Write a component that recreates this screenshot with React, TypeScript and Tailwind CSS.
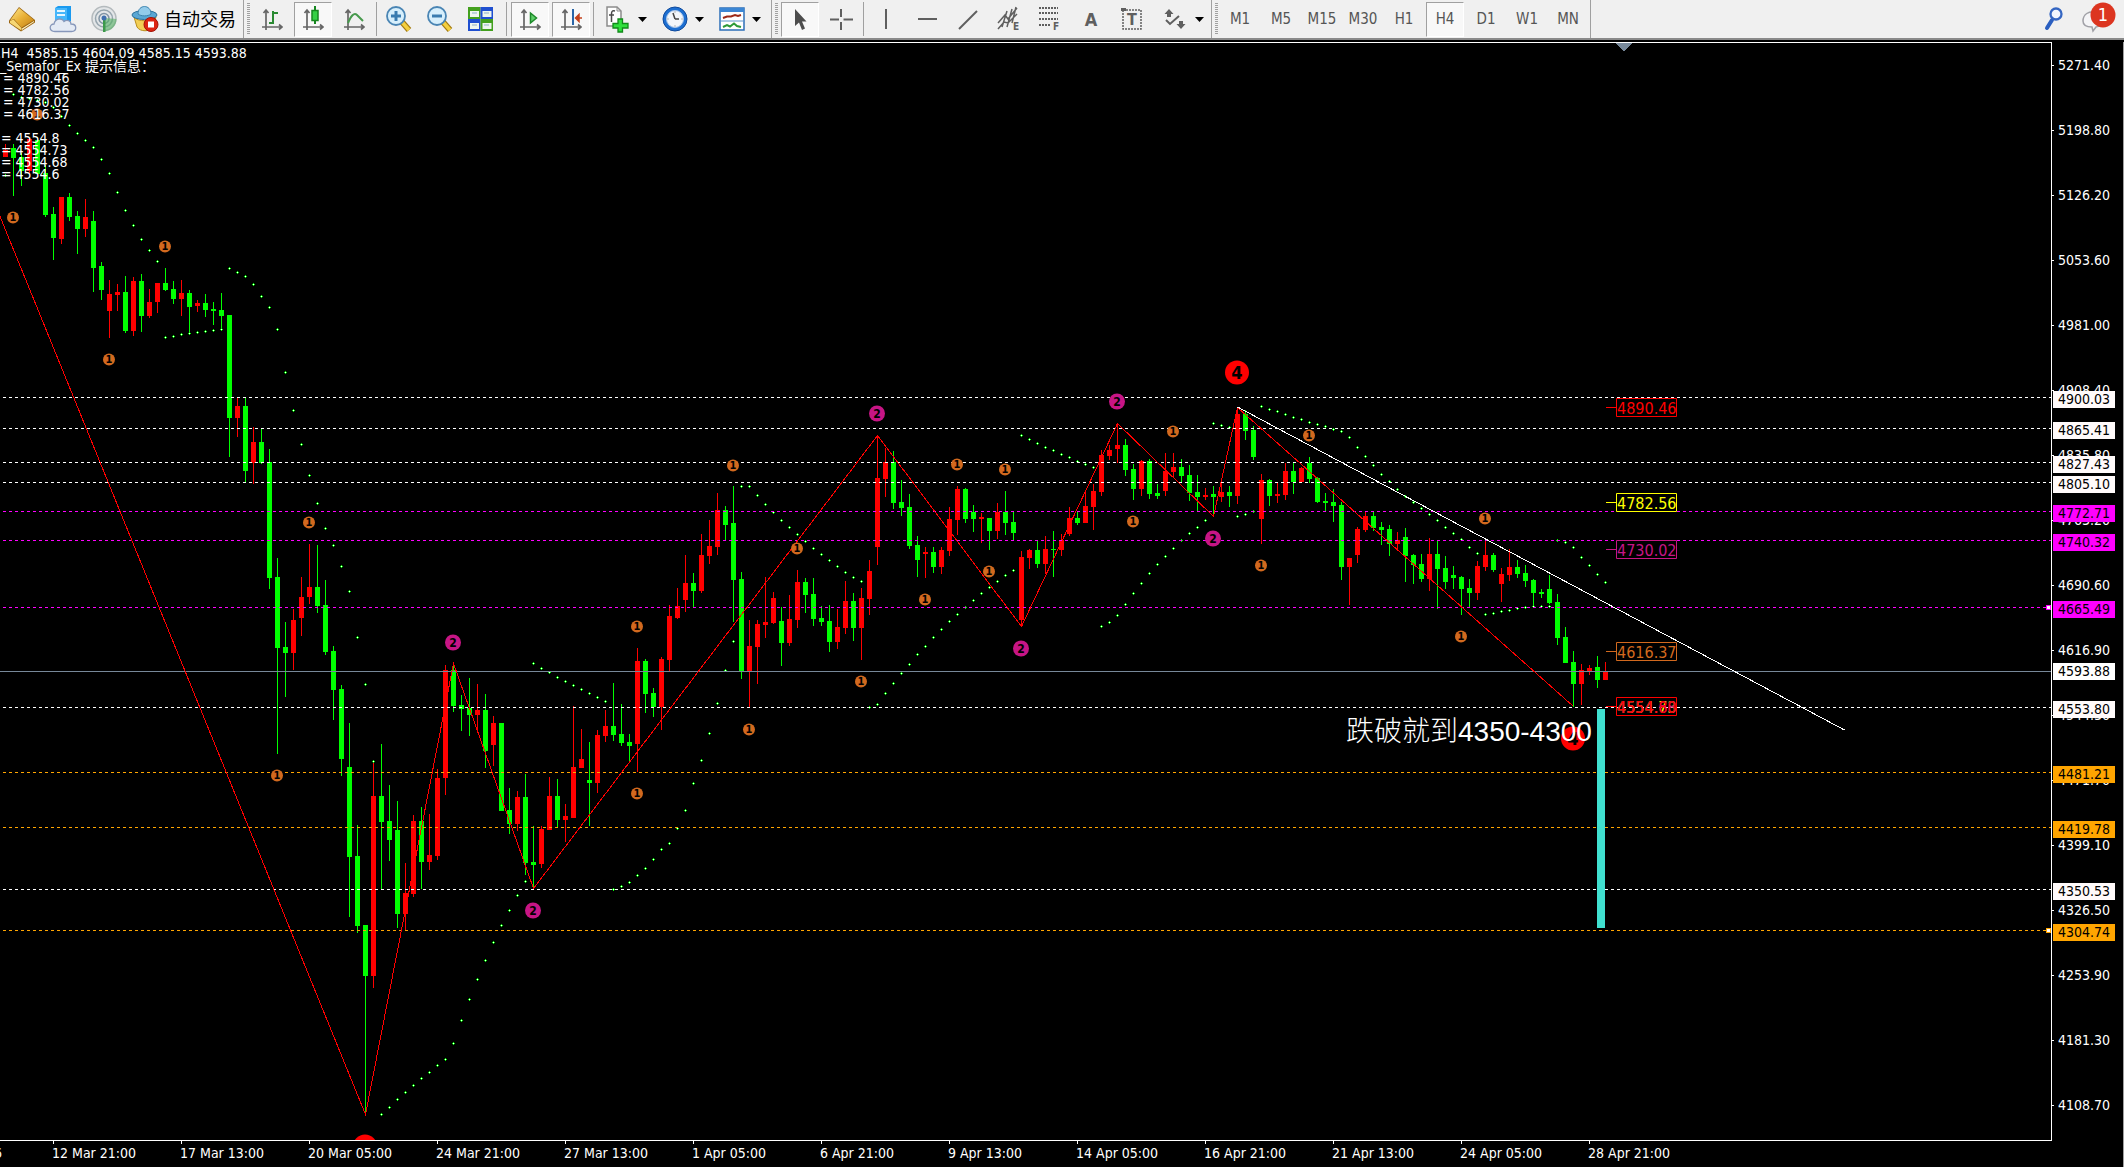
import type { ReactNode } from "react";

/* ------------------------------------------------------------------ */
/* Chart data. Vertical values are pixels from the top of the window.  */
/* ------------------------------------------------------------------ */

const PLOT_TOP = 43;
const STEP = 8;

// [high, body top, body bottom, low, rising]
type Candle = [number, number, number, number, 0 | 1];

const CANDLES: Candle[] = [
  [144, 150, 157, 157, 1], [144, 148, 158, 196, 0], [153, 157, 171, 186, 0], [137, 139, 171, 174, 1],
  [137, 140, 174, 174, 0], [165, 173, 215, 217, 0], [207, 214, 238, 260, 0], [197, 197, 239, 244, 1],
  [193, 197, 217, 221, 0], [211, 216, 229, 254, 0], [199, 217, 229, 237, 1], [211, 221, 268, 292, 0],
  [262, 266, 290, 300, 0], [280, 294, 311, 338, 1], [284, 292, 295, 311, 1], [276, 292, 331, 333, 0],
  [277, 281, 331, 336, 1], [274, 281, 316, 332, 0], [289, 302, 316, 318, 1], [283, 283, 302, 313, 1],
  [268, 283, 290, 291, 0], [281, 289, 299, 304, 0], [280, 293, 299, 316, 1], [290, 293, 307, 334, 0],
  [300, 303, 306, 312, 1], [294, 303, 310, 317, 0], [302, 309, 311, 325, 0], [293, 310, 316, 330, 0],
  [315, 315, 418, 457, 0], [398, 406, 418, 437, 1], [398, 406, 471, 483, 0], [427, 442, 463, 484, 1],
  [429, 442, 463, 464, 0], [449, 462, 578, 589, 0], [558, 577, 648, 754, 0], [622, 647, 653, 697, 0],
  [609, 620, 653, 670, 1], [577, 597, 618, 636, 1], [544, 587, 597, 604, 1], [545, 587, 606, 613, 0],
  [580, 605, 652, 655, 0], [646, 651, 690, 720, 0], [685, 689, 759, 776, 0], [723, 767, 857, 917, 0],
  [825, 856, 926, 933, 0], [925, 925, 976, 1113, 0], [762, 796, 976, 988, 1], [744, 796, 822, 889, 0],
  [785, 821, 840, 861, 0], [801, 830, 914, 928, 0], [863, 893, 914, 930, 1], [815, 821, 894, 897, 1],
  [807, 821, 862, 889, 0], [814, 855, 862, 870, 1], [769, 778, 856, 860, 1], [665, 670, 778, 795, 1],
  [665, 670, 706, 712, 0], [695, 705, 709, 731, 0], [678, 708, 715, 736, 0], [684, 710, 715, 732, 1],
  [694, 710, 751, 768, 0], [716, 723, 745, 766, 1], [723, 723, 811, 811, 0], [788, 810, 824, 834, 0],
  [791, 797, 824, 831, 1], [774, 797, 863, 875, 0], [826, 862, 865, 887, 0], [826, 829, 864, 868, 1],
  [777, 796, 830, 830, 1], [779, 796, 820, 827, 0], [804, 816, 820, 842, 1], [706, 767, 818, 818, 1],
  [729, 759, 768, 768, 1], [742, 780, 783, 826, 0], [730, 735, 783, 793, 1], [710, 726, 736, 742, 1],
  [683, 726, 735, 741, 0], [704, 734, 743, 746, 0], [734, 742, 746, 761, 0], [648, 661, 744, 772, 1],
  [659, 661, 694, 713, 0], [688, 693, 707, 717, 0], [657, 659, 707, 730, 1], [605, 616, 660, 671, 1],
  [588, 606, 618, 619, 1], [555, 583, 600, 612, 1], [573, 583, 591, 607, 0], [534, 555, 591, 593, 1],
  [520, 546, 556, 564, 1], [493, 510, 547, 555, 1], [506, 510, 525, 540, 0], [486, 523, 580, 622, 0],
  [572, 579, 672, 679, 0], [620, 646, 672, 707, 1], [620, 624, 647, 684, 1], [577, 622, 625, 638, 1],
  [592, 598, 623, 624, 1], [607, 621, 643, 666, 0], [595, 619, 643, 646, 1], [570, 582, 620, 628, 1],
  [578, 582, 595, 613, 0], [578, 594, 619, 626, 0], [606, 618, 622, 626, 0], [605, 621, 642, 652, 0],
  [609, 627, 642, 649, 1], [581, 601, 628, 634, 1], [593, 601, 628, 641, 0], [588, 598, 628, 660, 1],
  [560, 571, 599, 615, 1], [435, 478, 547, 565, 1], [448, 462, 479, 497, 1], [451, 462, 503, 509, 0],
  [480, 502, 508, 516, 0], [494, 507, 546, 549, 0], [536, 545, 560, 577, 0], [547, 552, 554, 578, 1],
  [547, 552, 567, 573, 0], [547, 550, 567, 574, 1], [507, 519, 551, 556, 1], [486, 489, 520, 535, 1],
  [488, 489, 519, 523, 0], [505, 512, 519, 532, 0], [513, 517, 519, 543, 1], [518, 518, 531, 550, 0],
  [503, 512, 531, 539, 1], [491, 512, 523, 535, 0], [512, 522, 533, 540, 0], [551, 557, 620, 626, 1],
  [549, 550, 558, 569, 1], [541, 550, 564, 568, 0], [536, 549, 564, 574, 1], [531, 549, 550, 577, 0],
  [534, 540, 550, 556, 1], [507, 518, 534, 536, 1], [512, 518, 523, 525, 0], [491, 506, 523, 523, 1],
  [484, 491, 507, 530, 1], [450, 455, 492, 496, 1], [445, 450, 456, 460, 1], [423, 445, 449, 463, 1],
  [439, 445, 470, 476, 0], [464, 469, 489, 500, 0], [460, 461, 489, 496, 1], [459, 461, 494, 499, 0],
  [484, 493, 496, 499, 0], [453, 471, 491, 496, 1], [453, 467, 472, 477, 1], [459, 467, 476, 482, 0],
  [465, 475, 493, 501, 0], [475, 492, 497, 511, 0], [488, 495, 497, 500, 1], [486, 494, 497, 516, 0],
  [482, 492, 497, 502, 1], [486, 492, 496, 507, 0], [407, 414, 496, 504, 1], [410, 414, 431, 440, 0],
  [426, 430, 457, 460, 0], [474, 480, 519, 544, 1], [479, 480, 496, 506, 0], [483, 494, 496, 503, 1],
  [463, 471, 495, 500, 1], [462, 471, 482, 494, 0], [467, 468, 482, 482, 1], [457, 463, 479, 483, 0],
  [477, 478, 502, 503, 0], [493, 501, 503, 511, 0], [489, 502, 506, 522, 0], [502, 505, 567, 580, 0],
  [558, 558, 567, 605, 1], [527, 529, 555, 563, 1], [512, 516, 530, 532, 1], [512, 516, 528, 531, 0],
  [522, 527, 530, 545, 0], [525, 529, 544, 556, 0], [532, 540, 544, 550, 1], [528, 537, 556, 582, 0],
  [554, 555, 565, 584, 0], [554, 564, 579, 582, 0], [538, 554, 579, 591, 1], [540, 554, 569, 609, 0],
  [556, 568, 582, 589, 0], [566, 575, 578, 589, 0], [576, 577, 589, 615, 0], [579, 588, 593, 607, 0],
  [561, 566, 593, 600, 1], [540, 555, 567, 571, 1], [553, 555, 570, 572, 0], [568, 574, 584, 602, 1],
  [549, 567, 575, 581, 1], [560, 567, 574, 578, 0], [565, 573, 581, 587, 0], [579, 580, 593, 607, 0],
  [589, 592, 594, 598, 0], [575, 589, 603, 604, 0], [594, 602, 638, 645, 0], [627, 637, 663, 663, 0],
  [651, 662, 684, 707, 0], [664, 670, 684, 705, 1], [665, 668, 671, 675, 1], [656, 667, 680, 688, 0],
  [662, 671, 680, 680, 1],
];

// Parabolic SAR, one value per candle.
const SAR = [
  175, 94, 97, 98, 100, 102, 107, 116, 125, 133, 140, 147, 159, 173, 192, 210, 225, 239, 250, 261,
  337, 336, 334, 333, 332, 331, 330, 329, 268, 272, 276, 284, 296, 307, 329, 372, 410, 444, 475, 503,
  528, 545, 566, 591, 637, 684, 761, 1114, 1107, 1099, 1092, 1085, 1078, 1072, 1065, 1059, 1043, 1020,
  999, 979, 960, 942, 925, 910, 895, 881, 663, 668, 672, 677, 681, 685, 689, 693, 697, 701, 889, 886,
  882, 875, 868, 859, 849, 843, 828, 810, 783, 760, 733, 703, 670, 641, 486, 486, 495, 504, 512, 520,
  527, 534, 541, 548, 554, 560, 566, 572, 577, 581, 707, 704, 693, 683, 673, 664, 654, 646, 637, 629,
  621, 614, 607, 600, 593, 587, 581, 575, 570, 435, 439, 443, 447, 450, 454, 457, 461, 464, 467, 626,
  622, 615, 604, 593, 583, 573, 564, 556, 548, 540, 533, 527, 520, 423, 425, 427, 516, 514, 511, 406,
  409, 411, 414, 417, 419, 422, 424, 426, 429, 431, 437, 447, 456, 465, 474, 481, 489, 496, 502, 508,
  514, 520, 527, 533, 539, 547, 553, 614, 613, 611, 610, 608, 607, 606, 606, 606, 540, 542, 547, 557,
  565, 574, 582,
];

const ZIGZAG: [number, number][] = [
  [-7, 200], [365, 1114], [453, 663], [533, 888], [877, 435], [1021, 626], [1117, 423], [1213, 516],
  [1237, 407], [1573, 706],
];

const LEVELS = [
  { y: 397, price: "4900.03", line: "#ffffff", tag: "bg-[#fffafa]" },
  { y: 428, price: "4865.41", line: "#ffffff", tag: "bg-[#fffafa]" },
  { y: 462, price: "4827.43", line: "#ffffff", tag: "bg-[#fffafa]" },
  { y: 482, price: "4805.10", line: "#ffffff", tag: "bg-[#fffafa]" },
  { y: 511, price: "4772.71", line: "#ff00ff", tag: "bg-[#ff00ff]" },
  { y: 540, price: "4740.32", line: "#ff00ff", tag: "bg-[#ff00ff]" },
  { y: 607, price: "4665.49", line: "#ff00ff", tag: "bg-[#ff00ff]", marked: true },
  { y: 671, price: "4593.88", line: "#778899", tag: "bg-white", solid: true, shift: 2 },
  { y: 707, price: "4553.80", line: "#ffffff", tag: "bg-[#fffafa]" },
  { y: 772, price: "4481.21", line: "#ffa500", tag: "bg-[#ffa500]" },
  { y: 827, price: "4419.78", line: "#ffa500", tag: "bg-[#ffa500]" },
  { y: 889, price: "4350.53", line: "#ffffff", tag: "bg-[#fffafa]" },
  { y: 930, price: "4304.74", line: "#ffa500", tag: "bg-[#ffa500]", marked: true },
];

const MINOR: [number, number][] = [
  [37, 114], [13, 217], [165, 246], [109, 359], [309, 522], [277, 775], [637, 626], [637, 793],
  [733, 465], [749, 729], [797, 548], [861, 681], [925, 599], [957, 464], [1005, 469], [989, 571],
  [1173, 431], [1133, 521], [1261, 565], [1309, 435], [1485, 518], [1461, 636],
];
const MIDDLE: [number, number][] = [
  [453, 642], [533, 910], [877, 413], [1117, 401], [1021, 648], [1213, 538],
];
const MAJOR: [number, number][] = [[1237, 372], [1573, 738], [365, 1146]];

const PRICE_MARKS = [
  { y: 407, color: "#ff0000", text: "4890.46" },
  { y: 502, color: "#ffff00", text: "4782.56" },
  { y: 549, color: "#c71585", text: "4730.02" },
  { y: 651, color: "#d2691e", text: "4616.37" },
];
const LAST_MARK = [
  { color: "#ffff00", text: "4554.73" },
  { color: "#c71585", text: "4554.68" },
  { color: "#ff0000", text: "4554.80" },
];

const PRICES = [
  "5271.40", "5198.80", "5126.20", "5053.60", "4981.00", "4908.40", "4835.80", "4763.20", "4690.60",
  "4616.90", "4544.30", "4471.70", "4399.10", "4326.50", "4253.90", "4181.30", "4108.70",
];
const TIMES = [
  "12 Mar 21:00", "17 Mar 13:00", "20 Mar 05:00", "24 Mar 21:00", "27 Mar 13:00", "1 Apr 05:00",
  "6 Apr 21:00", "9 Apr 13:00", "14 Apr 05:00", "16 Apr 21:00", "21 Apr 13:00", "24 Apr 05:00",
  "28 Apr 21:00",
];

/* ------------------------------------------------------------------ */
/* Toolbar icons                                                       */
/* ------------------------------------------------------------------ */

function Icon({ w = 28, h = 28, children }: { w?: number; h?: number; children: ReactNode }) {
  return (
    <svg width={w} height={h} viewBox={`0 0 ${w} ${h}`} fill="none" aria-hidden="true" className="block shrink-0">
      {children}
    </svg>
  );
}

const GRAY = "#5f5f5f";

const BookIcon = () => (
  <Icon>
    <defs>
      <linearGradient id="gold" x1="0" y1="0" x2="1" y2="1">
        <stop offset="0" stopColor="#ffe98f" />
        <stop offset=".5" stopColor="#e9b036" />
        <stop offset="1" stopColor="#c07f14" />
      </linearGradient>
    </defs>
    <path d="M11 2 27 15V17.500L13 26.500 1 18V15.500Z" fill="#9a6410" />
    <path d="M11 3 26 15 13.500 22.500 6 14 2 15.500Z" fill="url(#gold)" />
    <path d="M2 16 5.500 14.500 13.500 23V25.500L2 18Z" fill="#f7d774" />
    <path d="M14 23.500 26 16V17L14 25Z" fill="#fff3c4" />
  </Icon>
);

const CloudIcon = () => (
  <Icon>
    <path d="M6 3 9 1H22V16L19 18H6Z" fill="#1a9af0" />
    <path d="M6 3H18V18H6Z" fill="#46b6fa" />
    <path d="M8 6H16M8 10H16" stroke="#e6f6ff" strokeWidth="2" />
    <path
      d="M6 26.500C-.5 26.500 0 19 5 19 6 13.500 13 12.500 15 16.500 18 14 22 16 22 19 28.500 19 28 26.500 22.500 26.500Z"
      fill="#e4eaf4"
      stroke="#8797ba"
      strokeWidth="1.300"
    />
  </Icon>
);

const SignalIcon = () => (
  <Icon>
    <circle cx="14" cy="13.500" r="12" fill="#e3e6e8" stroke="#b4babd" strokeWidth="1.500" />
    <circle cx="14" cy="13.500" r="8.500" stroke="#97a5ae" strokeWidth="1.500" />
    <circle cx="14" cy="13.500" r="5" stroke="#8094a5" strokeWidth="1.500" />
    <path d="M14 13V26.500C22 26 26.500 20 26.500 14Z" fill="#55b063" opacity=".6" />
    <path d="M13 13H15.500V27H13Z" fill="#3c9a4b" />
    <circle cx="14" cy="13" r="2.500" fill="#3f6fae" />
  </Icon>
);

const AutoTradeIcon = () => (
  <Icon>
    <path d="M3 12C6 17 22 17 25 12L22 22C19 27 9 27 6 22Z" fill="#f3cf55" stroke="#b98d1c" />
    <ellipse cx="13.500" cy="10" rx="12.500" ry="4.500" fill="#5aa7d4" stroke="#2d7099" />
    <path d="M7 9C7 -1 20 -1 20 9 17 11.500 10 11.500 7 9Z" fill="#93cbea" stroke="#3b83ae" />
    <circle cx="20" cy="19.500" r="7" fill="#dd2412" stroke="#a01206" />
    <path d="M17 16.500H23V22.500H17Z" fill="#fff" />
  </Icon>
);

const Axes = () => (
  <path d="M5 24V5M2.500 7 5 4 7.500 7M1 21H20M18 18.500 21 21 18 23.500" stroke="#666" strokeWidth="1.700" />
);

const BarsIcon = () => (
  <Icon w={22} h={26}>
    <Axes />
    <path d="M8 17H12M12 18V5M12 7H17" stroke="#2a8a32" strokeWidth="2" />
  </Icon>
);
const CandleIcon = () => (
  <Icon w={22} h={26}>
    <Axes />
    <path d="M13 0V18" stroke="#16861f" strokeWidth="2" />
    <path d="M10 4.500H16V14.500H10Z" fill="#35d045" stroke="#16861f" strokeWidth="1.500" />
  </Icon>
);
const LineChartIcon = () => (
  <Icon w={22} h={26}>
    <Axes />
    <path d="M5 17C8 10 11 6 14 9L20 15" stroke="#479a4d" strokeWidth="2" />
  </Icon>
);

const Zoomer = ({ plus = false }: { plus?: boolean }) => (
  <Icon>
    <path d="M17 17 24 25" stroke="#a37a10" strokeWidth="6" />
    <path d="M17 17 24 25" stroke="#f4cf3e" strokeWidth="3.500" />
    <circle cx="11" cy="11" r="9" fill="#d7effc" stroke="#4a85b4" strokeWidth="1.800" />
    <path d="M6 11H16" stroke="#3a7cb0" strokeWidth="3" />
    {plus && <path d="M11 6V16" stroke="#3a7cb0" strokeWidth="3" />}
  </Icon>
);

const TilesIcon = () => (
  <Icon>
    <path d="M1 2H13.500V14H1Z" fill="#43a01e" />
    <path d="M13.500 2H26V14H13.500Z" fill="#1f4fd0" />
    <path d="M1 14H13.500V26H1Z" fill="#1f4fd0" />
    <path d="M13.500 14H26V26H13.500Z" fill="#43a01e" />
    <path d="M3 6H12V12H3ZM15.500 6H24.500V12H15.500ZM3 18H12V24H3ZM15.500 18H24.500V24H15.500Z" fill="#eef6ee" />
    <path d="M5 8H10M17 8H22M5 20H10M17 20H22" stroke="#8fb0c8" />
  </Icon>
);

const ScrollIcon = () => (
  <Icon w={22} h={26}>
    <Axes />
    <path d="M11.500 7 17.500 12 11.500 17Z" fill="#5fd06a" stroke="#1e8a2a" strokeWidth="1.500" />
  </Icon>
);
const ShiftIcon = () => (
  <Icon w={22} h={26}>
    <Axes />
    <path d="M13 3V19" stroke="#2a66a8" strokeWidth="2" />
    <path d="M22 12H18M19 8.500 15.500 12 19 15.500Z" stroke="#c4411c" strokeWidth="1.500" fill="#c4411c" />
  </Icon>
);

const IndicatorIcon = () => (
  <Icon>
    <path d="M3 2H13L17 6V21H3Z" fill="#fff" stroke="#8c8c8c" strokeWidth="1.500" />
    <path d="M13 2V6H17" stroke="#8c8c8c" />
    <path d="M11 6C8 5 7.500 7 7.500 9V17M5 10H10" stroke="#4a4a4a" strokeWidth="1.500" />
    <path d="M14 14H18.500V18.500H24V23H18.500V27H14V23H9V18.500H14Z" fill="#2fe03c" stroke="#118a1a" strokeWidth="1.300" />
  </Icon>
);
const ClockIcon = () => (
  <Icon>
    <circle cx="14" cy="14" r="12" fill="#1d6fd1" stroke="#0f4a9c" />
    <circle cx="14" cy="14" r="8.500" fill="#f2f6fa" stroke="#a9c6ea" />
    <path d="M14 14 12 8M14 14H18" stroke="#444" strokeWidth="1.500" />
    <path d="M14 6.500V7.500M14 20.500V21.500M6.500 14H7.500M20.500 14H21.500" stroke="#777" />
  </Icon>
);
const TemplateIcon = () => (
  <Icon>
    <path d="M2 3H26V25H2Z" fill="#fff" stroke="#2c6fb8" strokeWidth="1.500" />
    <path d="M2 3H26V7H2Z" fill="#3b86d4" />
    <path d="M2 16H26" stroke="#5d95cc" />
    <path d="M5 13 9 11.500H13L17 10 20 11 23 10" stroke="#9c2a18" strokeWidth="2" />
    <path d="M5 22 9 20 12 21.500 16 18.500 19 21 23 22" stroke="#2d9a38" strokeWidth="2" />
  </Icon>
);

const CursorIcon = () => (
  <Icon>
    <path d="M9 4V21L13 17.500 16 25 19 23.500 16 16.500H20.500Z" fill="#4d4d4d" />
  </Icon>
);
const CrosshairIcon = () => (
  <Icon>
    <path d="M14 4V12M14 17V25M3 14.500H12M16.500 14.500H26" stroke={GRAY} strokeWidth="2" />
  </Icon>
);
const VLineIcon = () => <Icon><path d="M14 4V24" stroke={GRAY} strokeWidth="2" /></Icon>;
const HLineIcon = () => <Icon><path d="M5 14H24" stroke={GRAY} strokeWidth="2" /></Icon>;
const TrendIcon = () => <Icon><path d="M5 24 23 6" stroke={GRAY} strokeWidth="2" /></Icon>;

const ChannelIcon = () => (
  <Icon>
    <path
      d="M3 18 10 10 13 14 22 3M3 24 9 17 13 18 22 9M7 22 12 6M12 22 17 4M17 18 21 2"
      stroke={GRAY}
      strokeWidth="1.500"
    />
    <text x="18" y="25" fontSize="10" fontWeight="700" fill={GRAY}>E</text>
  </Icon>
);
const FiboIcon = () => (
  <Icon>
    <path d="M3 3H22M3 8H22M3 14H22M3 20H14" stroke={GRAY} strokeWidth="2" strokeDasharray="2 1" />
    <text x="17" y="25" fontSize="10" fontWeight="700" fill={GRAY}>F</text>
  </Icon>
);
const TextIcon = () => (
  <Icon>
    <text x="14" y="21" fontSize="18" fontWeight="700" textAnchor="middle" fill={GRAY}>A</text>
  </Icon>
);
const LabelIcon = () => (
  <Icon>
    <path d="M5 5H23V24H5Z" stroke={GRAY} strokeWidth="1.500" strokeDasharray="2 1" />
    <path d="M3 3H8V6H3Z" fill={GRAY} />
    <text x="14" y="20" fontSize="16" fontWeight="700" textAnchor="middle" fill={GRAY}>T</text>
  </Icon>
);
const ShapesIcon = () => (
  <Icon>
    <path d="M8 4 12.500 9H10V12H6V9H3.500ZM18 16H22V19H24.500L20 24 15.500 19H18Z" fill={GRAY} />
    <path d="M5 15 9 19 18 11" stroke={GRAY} strokeWidth="2" />
  </Icon>
);

const SearchIcon = () => (
  <Icon w={24}>
    <path d="M10 15 5 23" stroke="#2b5fc0" strokeWidth="4" strokeLinecap="round" />
    <circle cx="14" cy="9" r="5.500" fill="#f2f6fd" stroke="#3566c2" strokeWidth="2.300" />
  </Icon>
);

const ChatIcon = () => (
  <Icon w={36} h={36}>
    <path
      d="M3 20C3 13 9 10 15 11 25 13 25 25 16 26L13 30 12 26C6 26 3 24 3 20Z"
      fill="#f4f4f6"
      stroke="#a0a0a6"
      strokeWidth="1.500"
    />
    <circle cx="23" cy="14" r="12.500" fill="#dc3520" />
    <text x="23" y="20" fontSize="18" textAnchor="middle" fill="#fff">1</text>
  </Icon>
);

/* ------------------------------------------------------------------ */
/* Toolbar parts                                                       */
/* ------------------------------------------------------------------ */

function ToolButton({ label, pressed = false, children }: { label: string; pressed?: boolean; children: ReactNode }) {
  return (
    <button
      type="button"
      aria-label={label}
      aria-pressed={pressed}
      className={`flex h-[35px] w-[38px] items-center justify-center border ${
        pressed
          ? "border-t-[#a0a0a0] border-l-[#a0a0a0] border-r-white border-b-white bg-[#f8f8f8]"
          : "border-transparent"
      }`}
    >
      {children}
    </button>
  );
}

function DropButton({ label, children }: { label: string; children: ReactNode }) {
  return (
    <button type="button" aria-label={label} className="flex h-[35px] w-[54px] items-center gap-[6px] pl-[7px]">
      {children}
      <svg width="9" height="5" viewBox="0 0 9 5" aria-hidden="true">
        <path d="M0 0H9L4.500 5Z" fill="#000" />
      </svg>
    </button>
  );
}

const Divider = () => <div className="h-[34px] w-px bg-[#a0a0a0]" />;

const Grip = () => (
  <div className="flex items-center gap-[3px]">
    <div className="h-[38px] w-px bg-[#a0a0a0]" />
    <div className="h-[32px] w-[3px] bg-[repeating-linear-gradient(to_bottom,#a0a0a0_0_1px,#f0f0f0_1px_2px)]" />
  </div>
);

const PERIODS = ["M1", "M5", "M15", "M30", "H1", "H4", "D1", "W1", "MN"];

function Toolbar() {
  return (
    <header className="flex h-[40px] shrink-0 items-center border-b-2 border-[#8a8a8a] bg-[#f0f0f0] pl-[3px]">
      <div className="flex items-center gap-[3px]">
        <ToolButton label="New order"><BookIcon /></ToolButton>
        <ToolButton label="Cloud storage"><CloudIcon /></ToolButton>
        <ToolButton label="Signals"><SignalIcon /></ToolButton>
        <button type="button" className="flex h-[35px] items-center gap-[5px] pr-[4px] pl-[5px] text-[18px] text-black">
          <AutoTradeIcon />
          自动交易
        </button>
        <Grip />
        <ToolButton label="Bar chart"><BarsIcon /></ToolButton>
        <ToolButton label="Candlesticks" pressed><CandleIcon /></ToolButton>
        <ToolButton label="Line chart"><LineChartIcon /></ToolButton>
        <Divider />
        <ToolButton label="Zoom in"><Zoomer plus /></ToolButton>
        <ToolButton label="Zoom out"><Zoomer /></ToolButton>
        <ToolButton label="Tile windows"><TilesIcon /></ToolButton>
        <div className="pr-px pl-[3px]"><Divider /></div>
        <ToolButton label="Auto scroll" pressed><ScrollIcon /></ToolButton>
        <ToolButton label="Chart shift" pressed><ShiftIcon /></ToolButton>
        <Divider />
        <DropButton label="Indicators"><IndicatorIcon /></DropButton>
        <DropButton label="Periods"><ClockIcon /></DropButton>
        <DropButton label="Templates"><TemplateIcon /></DropButton>
        <div className="pl-[3px]"><Grip /></div>
        <ToolButton label="Cursor" pressed><CursorIcon /></ToolButton>
        <ToolButton label="Crosshair"><CrosshairIcon /></ToolButton>
        <Divider />
        <ToolButton label="Vertical line"><VLineIcon /></ToolButton>
        <ToolButton label="Horizontal line"><HLineIcon /></ToolButton>
        <ToolButton label="Trend line"><TrendIcon /></ToolButton>
        <ToolButton label="Equidistant channel"><ChannelIcon /></ToolButton>
        <ToolButton label="Fibonacci retracement"><FiboIcon /></ToolButton>
        <ToolButton label="Text"><TextIcon /></ToolButton>
        <ToolButton label="Text label"><LabelIcon /></ToolButton>
        <DropButton label="Arrows"><ShapesIcon /></DropButton>
        <Grip />
        {PERIODS.map((p) => (
          <ToolButton key={p} label={p} pressed={p === "H4"}>
            <span className="text-[15px] text-[#555]">{p}</span>
          </ToolButton>
        ))}
        <div className="h-[38px] w-px bg-[#a0a0a0]" />
      </div>
      <div className="ml-auto flex items-center gap-[14px] pr-[8px]">
        <button type="button" aria-label="Search"><SearchIcon /></button>
        <button type="button" aria-label="Notifications"><ChatIcon /></button>
      </div>
    </header>
  );
}

/* ------------------------------------------------------------------ */
/* Chart                                                               */
/* ------------------------------------------------------------------ */

function Badge({ at, r, color, size, digit }: { at: [number, number]; r: number; color: string; size: number; digit: string }) {
  return (
    <g>
      <circle cx={at[0]} cy={at[1] + 0.5} r={r} fill={color} />
      <text
        x={at[0]}
        y={at[1] + 0.5 + size * 0.36}
        fontSize={size}
        fontWeight="700"
        textAnchor="middle"
        fill="#000"
      >
        {digit}
      </text>
    </g>
  );
}

function Plot() {
  return (
    <svg className="block w-full flex-1 overflow-hidden" aria-label="H4 candlestick chart">
      <g transform={`translate(0 ${-PLOT_TOP})`}>
        <g shapeRendering="crispEdges">
          {CANDLES.map(([high, top, bottom, low, rising], i) => (
            <g key={i} fill={rising ? "#ff0000" : "#00ff00"}>
              <rect x={i * STEP + 5} y={high} width="1" height={Math.max(low - high, 1)} />
              <rect x={i * STEP + 3} y={top} width="5" height={Math.max(bottom - top, 1)} />
            </g>
          ))}
          {SAR.map((y, i) => (
            <g key={i}>
              <path d={`M${i * STEP + 4} ${y + 0.5}h3M${i * STEP + 5.5} ${y - 1}v3`} stroke="#00ff00" />
              <rect x={i * STEP + 5} y={y} width="1" height="1" fill="#fff" />
            </g>
          ))}
          {LEVELS.map((l) => (
            <line
              key={l.price}
              x1={l.solid ? 0 : 3}
              x2="100%"
              y1={l.y + 0.5}
              y2={l.y + 0.5}
              stroke={l.line}
              strokeDasharray={l.solid ? undefined : "3 3"}
            />
          ))}
          {LEVELS.filter((l) => l.marked).map((l) => (
            <g key={l.price}>
              <rect x="2046" y={l.y - 2} width="5" height="5" fill={l.line} />
              <rect x="2047" y={l.y - 1} width="3" height="3" fill="#fff" />
            </g>
          ))}
          <polyline
            points={ZIGZAG.map(([x, y]) => `${x + 0.5},${y + 0.5}`).join(" ")}
            fill="none"
            stroke="#ff0000"
          />
          <line x1="1237.500" y1="407" x2="1844.500" y2="730" stroke="#fff" />
          <rect x="1597" y="709" width="8" height="219" fill="#40e0d0" />
          <path d="M1616 43H1632L1624 52Z" fill="#778899" />
        </g>
        {MINOR.map((p, i) => <Badge key={i} at={p} r={6} color="#d2691e" size={11} digit="1" />)}
        {MIDDLE.map((p, i) => <Badge key={i} at={p} r={8} color="#c71585" size={12} digit="2" />)}
        {MAJOR.map((p, i) => <Badge key={i} at={p} r={12} color="#ff0000" size={18} digit="4" />)}
        {PRICE_MARKS.map((m) => (
          <g key={m.text}>
            <path d={`M1606 ${m.y + 0.5}H1616M1616.500 ${m.y - 8.5}h60v18h-60Z`} stroke={m.color} fill="none" />
            <text x="1617" y={m.y + 7} fontSize="16" fill={m.color}>{m.text}</text>
          </g>
        ))}
        <path d="M1606 706.500H1616M1616.500 697.500h60v18h-60Z" stroke="#ff0000" fill="none" />
        {LAST_MARK.map((m) => (
          <text key={m.text} x="1617" y="713" fontSize="16" fill={m.color}>{m.text}</text>
        ))}
        <text
          x="1346"
          y="741"
          fontSize="28"
          fill="#fff"
          className="font-['Liberation_Sans','Noto_Sans_CJK_SC',sans-serif] font-light"
        >
          跌破就到4350-4300
        </text>
      </g>
    </svg>
  );
}

function Readout() {
  return (
    <div className="absolute top-[4px] left-0 whitespace-pre text-[14px] leading-[12px] text-white">
      <p className="-ml-[3px]">,H4  4585.15 4604.09 4585.15 4593.88</p>
      <p className="pt-px">_Semafor_Ex 提示信息：</p>
      <div className="pl-[3px]">
        <p>= 4890.46</p>
        <p>= 4782.56</p>
        <p>= 4730.02</p>
        <p>= 4616.37</p>
      </div>
      <div className="pt-[12px] pl-px">
        <p>= 4554.8</p>
        <p>= 4554.73</p>
        <p>= 4554.68</p>
        <p>= 4554.6</p>
      </div>
    </div>
  );
}

function PriceAxis() {
  return (
    <aside className="relative w-[72px] shrink-0 overflow-hidden border-r border-[#a0a0a0] pt-[14px] text-[14px] text-white">
      {PRICES.map((p) => (
        <div key={p} className="h-[65px]">
          <div className="flex h-[19px] items-center gap-[4px]">
            <span className="h-px w-[2px] bg-white" />
            {p}
          </div>
        </div>
      ))}
      {LEVELS.map((l) => (
        <div
          key={l.price}
          className={`absolute left-px flex h-[17px] w-[62px] items-center pl-[5px] text-black ${l.tag}`}
          style={{ top: l.y - 48 - (l.shift ?? 0) }}
        >
          {l.price}
        </div>
      ))}
    </aside>
  );
}

function TimeAxis() {
  return (
    <footer className="flex h-[26px] shrink-0 overflow-hidden whitespace-nowrap text-[14px] leading-[24px] text-white">
      <div className="w-[52px] shrink-0"><span className="-ml-[6px]">6</span></div>
      {TIMES.map((t) => (
        <div key={t} className="w-[128px] shrink-0">
          <div className="ml-px h-[3px] w-px bg-white" />
          <div className="-mt-[3px]">{t}</div>
        </div>
      ))}
    </footer>
  );
}

export default function App() {
  return (
    <div className="flex min-h-screen flex-col overflow-hidden bg-black font-['DejaVu_Sans_Condensed','Noto_Sans_CJK_SC',sans-serif]">
      <Toolbar />
      <main className="flex flex-1 pt-[2px]">
        <div className="flex min-w-0 flex-1 flex-col">
          <div className="relative flex flex-1 flex-col border border-l-0 border-white">
            <Plot />
            <Readout />
          </div>
          <TimeAxis />
        </div>
        <PriceAxis />
      </main>
    </div>
  );
}
